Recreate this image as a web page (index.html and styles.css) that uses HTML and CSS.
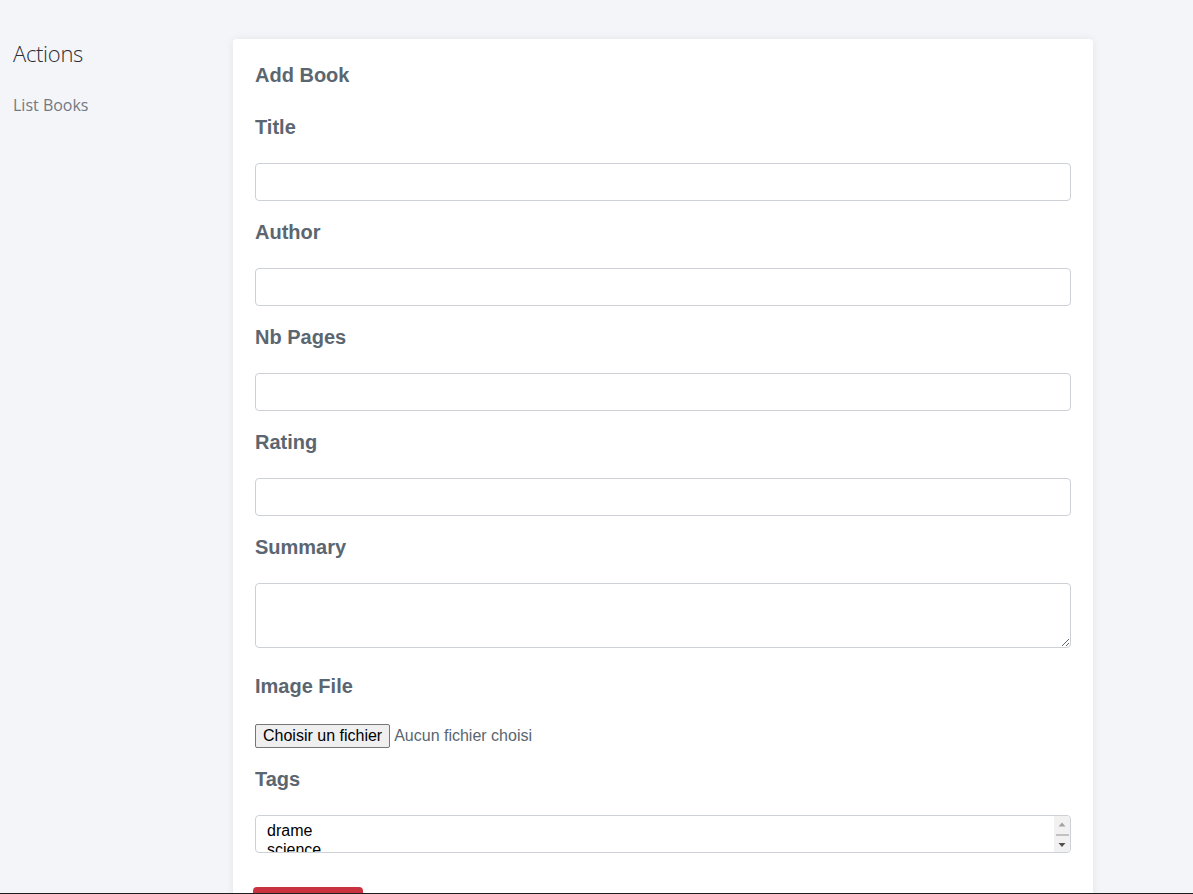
FILE: index.html
```html
<!DOCTYPE html>
<html lang="fr">
<head>
<meta charset="utf-8">
<title>Add Book</title>
<link rel="stylesheet" href="styles.css">
</head>
<body>
<div class="layout">
  <aside class="sidebar">
    <h2 class="side-title">Actions</h2>
    <a class="side-link" href="#">List Books</a>
  </aside>
  <main class="card">
    <h3 class="card-title">Add Book</h3>
    <form class="form">
      <label class="lbl">Title</label>
      <input class="field" type="text">
      <label class="lbl">Author</label>
      <input class="field" type="text">
      <label class="lbl">Nb Pages</label>
      <input class="field" type="text">
      <label class="lbl">Rating</label>
      <input class="field" type="text">
      <label class="lbl">Summary</label>
      <textarea class="field area"></textarea>
      <label class="lbl">Image File</label>
      <div class="file">
        <span class="file-btn">Choisir un fichier</span>
        <span class="file-txt">Aucun fichier choisi</span>
      </div>
      <label class="lbl">Tags</label>
      <div class="tags-wrap">
        <select class="field tags" multiple size="2">
          <option>drame</option>
          <option>science</option>
          <option>roman</option>
        </select>
        <div class="sbar">
          <svg class="sb-up" width="16" height="8" viewBox="0 0 16 8"><path d="M4.5 6.5 L8 2.5 L11.5 6.5 Z" fill="#a3a3a3"/></svg>
          <span class="sb-thumb"></span>
          <svg class="sb-down" width="16" height="8" viewBox="0 0 16 8"><path d="M4.5 2 L11.5 2 L8 6 Z" fill="#505050"/></svg>
        </div>
      </div>
      <button class="submit" type="button">Add Book</button>
    </form>
  </main>
</div>
<div class="edge"></div>
</body>
</html>
```
FILE: styles.css
```css
html, body {
  margin: 0;
  padding: 0;
  background: #f4f5f9;
}
body {
  font-family: "Liberation Sans", Arial, sans-serif;
}
.layout {
  display: flex;
  align-items: flex-start;
  padding-top: 39px;
}
.sidebar {
  width: 220px;
  padding-left: 13px;
  flex: none;
}
.side-title {
  margin: 0;
  font-family: "Open Sans", sans-serif;
  font-weight: 300;
  font-size: 22px;
  line-height: 28px;
  color: #2c2c34;
  letter-spacing: -0.3px;
}
.side-link {
  display: block;
  margin-top: 27px;
  font-family: "Open Sans", sans-serif;
  font-weight: 400;
  font-size: 16px;
  line-height: 22px;
  color: #737982;
  text-decoration: none;
  letter-spacing: 0;
}
.card {
  width: 860px;
  box-sizing: border-box;
  background: #fff;
  border-radius: 4px;
  box-shadow: 0 0 8px rgba(0, 0, 0, 0.07);
  padding: 24px 22px 40px;
}
.card-title {
  margin: 0 0 28px;
  font-size: 20px;
  line-height: 24px;
  font-weight: 700;
  color: #5b6670;
}
.form {
  display: flex;
  flex-direction: column;
  align-items: flex-start;
}
.lbl {
  display: block;
  font-size: 20px;
  line-height: 24px;
  font-weight: 700;
  color: #5b6670;
  margin-bottom: 24px;
}
.field {
  display: block;
  width: 816px;
  height: 38px;
  box-sizing: border-box;
  border: 1px solid #cdd1d5;
  border-radius: 4px;
  background: #fff;
  margin: 0 0 19px;
  font-family: "Liberation Sans", Arial, sans-serif;
  font-size: 16px;
  padding: 6px 12px;
}
.area {
  height: 65px;
  margin-bottom: 26px;
  resize: vertical;
}
.file {
  display: flex;
  align-items: center;
  gap: 4px;
  height: 24px;
  margin-bottom: 19px;
  margin-top: 2px;
}
.file-btn {
  display: inline-block;
  box-sizing: border-box;
  height: 24px;
  line-height: 20px;
  padding: 1px 7px;
  background: #efefef;
  border: 1px solid #767676;
  border-radius: 2px;
  font-size: 16px;
  color: #000;
}
.file-txt {
  font-size: 16px;
  color: #5b6670;
}
.tags-wrap {
  position: relative;
  margin-bottom: 34px;
}
.tags {
  padding: 6px 9px;
  overflow-y: hidden;
  color: #000;
  margin: 0;
}
.tags option {
  padding: 0 2px;
  line-height: 19px;
}
.sbar {
  position: absolute;
  top: 1px;
  right: 1px;
  bottom: 1px;
  width: 16px;
  background: #f1f1f1;
  border-radius: 0 3px 3px 0;
  display: flex;
  flex-direction: column;
  align-items: center;
  justify-content: space-between;
  padding: 4px 0 3px;
  box-sizing: border-box;
}
.sb-up, .sb-down {
  display: block;
}
.sb-thumb {
  display: block;
  width: 13px;
  height: 2px;
  background: #c1c1c1;
}
.submit {
  margin-left: -2px;
  width: 110px;
  height: 38px;
  border: none;
  border-radius: 4px;
  background: #c8333f;
  color: #fff;
  font-size: 16px;
  font-family: "Liberation Sans", Arial, sans-serif;
}
.edge {
  position: fixed;
  left: 0;
  right: 0;
  bottom: 0;
  height: 1px;
  background: #1e1e1e;
}
```
